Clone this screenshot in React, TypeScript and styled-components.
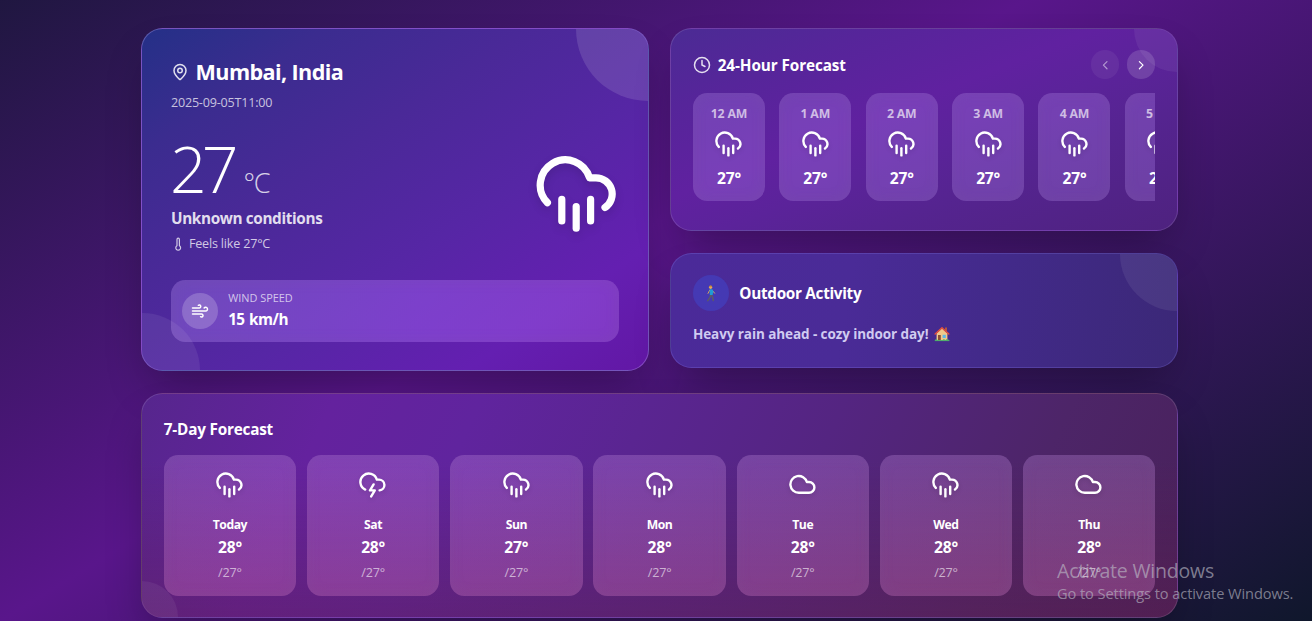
import React from "react";
import styled, { createGlobalStyle, css } from "styled-components";
import {
  ChevronLeft,
  ChevronRight,
  Clock,
  Cloud,
  CloudLightning,
  CloudRain,
  MapPin,
  Thermometer,
  Wind,
} from "lucide-react";

const GlobalStyle = createGlobalStyle`
  *, *::before, *::after { box-sizing: border-box; }
  html, body { margin: 0; padding: 0; height: 100%; overflow: hidden; }
  body {
    font-family: "Open Sans", "Noto Sans", sans-serif;
    color: #fff;
    background: #0f172b;
  }
`;

const Page = styled.div`
  position: relative;
  height: 621px;
  overflow: hidden;
  padding: 28px 0 0 141.15px;
  background: linear-gradient(to bottom right, #0f172b, #59168b 50%, #0f172b) 0 -179px / 1320px 800px no-repeat;
`;

const Dashboard = styled.main`
  width: 1036.8px;
  display: flex;
  flex-direction: column;
  gap: 22px;
`;

const TopRow = styled.div`
  display: grid;
  grid-template-columns: 1fr 1fr;
  gap: 21.6px;
  align-items: start;
`;

const SideColumn = styled.div`
  display: flex;
  flex-direction: column;
  gap: 22.2px;
  min-width: 0;
`;

const Card = styled.section`
  position: relative;
  overflow: hidden;
  border-radius: 21.6px;
  border: 1px solid rgba(255, 255, 255, 0.13);
  padding: 21.6px;
  box-shadow: 0 22px 45px -11px rgba(0, 0, 0, 0.32);
`;

const CurrentCard = styled(Card)`
  height: 343.2px;
  padding: 28.8px;
  border-color: rgba(200, 180, 255, 0.32);
  background: linear-gradient(to bottom right, #243087 0%, #3b2c8f 18%, #4a2998 38%, #5626a5 60%, #641fb1 82%, #6217a5 100%);
`;

const HourlyCard = styled(Card)`
  height: 202.8px;
  background: linear-gradient(to bottom right, #4b2b94 0%, #56259a 20%, #6021a0 42%, #5b239a 55%, #552490 70%, #4e227f 100%);
`;

const ActivityCard = styled(Card)`
  height: 114.8px;
  border-color: rgba(150, 140, 255, 0.22);
  background: linear-gradient(100deg, #4b2a99 0%, #4a2b97 35%, #422a89 65%, #3b2877 100%);
`;

const WeeklyCard = styled(Card)`
  height: 224.4px;
  background:
    linear-gradient(to bottom, rgba(96, 24, 60, 0) 30%, rgba(96, 28, 70, 0.38) 100%),
    linear-gradient(115deg, #56268d 0%, #64229e 17%, #60249e 30%, #5a2591 45%, #542581 62%, #4d2568 82%, #48215a 100%);
`;

const Bubble = styled.span<{ $r: number; $corner: "top" | "bottom"; $alpha: number }>`
  position: absolute;
  width: ${(p) => p.$r * 2}px;
  height: ${(p) => p.$r * 2}px;
  border-radius: 50%;
  background: rgba(255, 255, 255, ${(p) => p.$alpha});
  ${(p) =>
    p.$corner === "top"
      ? css`top: -${p.$r}px; right: -${p.$r}px;`
      : css`bottom: -${p.$r}px; left: -${p.$r}px;`}
`;

const Place = styled.h1`
  margin: 0;
  display: flex;
  align-items: center;
  gap: 6.6px;
  font-size: 21.6px;
  line-height: 28.8px;
  font-weight: 700;
  letter-spacing: -0.6px;
  svg { opacity: 0.85; }
`;

const Stamp = styled.div`
  margin-top: 7.2px;
  font-size: 12.6px;
  line-height: 18px;
  letter-spacing: -0.22px;
  color: rgba(255, 255, 255, 0.72);
`;

const CurrentRow = styled.div`
  display: flex;
  justify-content: space-between;
  align-items: center;
  margin-top: 20.8px;
  > svg {
    margin: -1.6px -0.8px 0 0;
    filter: drop-shadow(0 4px 4px rgba(0, 0, 0, 0.12));
  }
`;

const Degrees = styled.div`
  display: flex;
  align-items: baseline;
  gap: 9.8px;
  height: 64.8px;
  margin-left: -1px;
  line-height: 70.2px;
  font-size: 64.4px;
  font-weight: 300;
  letter-spacing: -4.9px;
`;

const Unit = styled.span`
  font-size: 27px;
  letter-spacing: -1.2px;
  color: rgba(255, 255, 255, 0.8);
`;

const Condition = styled.div`
  margin-top: 8.4px;
  font-size: 15.3px;
  line-height: 25.2px;
  font-weight: 700;
  letter-spacing: -0.36px;
  color: rgba(255, 255, 255, 0.86);
`;

const FeelsLike = styled.div`
  display: flex;
  align-items: center;
  gap: 3.6px;
  margin-top: 4px;
  font-size: 12.6px;
  line-height: 18px;
  letter-spacing: -0.2px;
  color: rgba(255, 255, 255, 0.75);
`;

const glass = css`
  border-radius: 14.4px;
  background: rgba(195, 150, 255, 0.26);
  box-shadow: inset 0 0 14px rgba(120, 90, 150, 0.2);
`;

const WindPanel = styled.div`
  ${glass}
  display: flex;
  align-items: center;
  gap: 10.4px;
  margin-top: 27.4px;
  padding: 10.8px;
  background: linear-gradient(to right, rgba(165, 125, 240, 0.38), rgba(160, 95, 240, 0.48) 55%, rgba(160, 90, 225, 0.48));
`;

const Disc = styled.span<{ $fill: string }>`
  display: flex;
  align-items: center;
  justify-content: center;
  flex: none;
  width: 36px;
  height: 36px;
  border-radius: 50%;
  background: ${(p) => p.$fill};
`;

const WindLabel = styled.div`
  font-size: 10.9px;
  line-height: 14.4px;
  color: rgba(255, 255, 255, 0.7);
`;

const WindValue = styled.div`
  padding-top: 2px;
  font-size: 15.3px;
  line-height: 23.2px;
  font-weight: 700;
  letter-spacing: -0.5px;
  word-spacing: 1px;
`;

const CardHead = styled.header`
  display: flex;
  align-items: center;
  justify-content: space-between;
  height: 28.8px;
`;

const Title = styled.h2<{ $track?: number }>`
  margin: 0;
  padding-top: 1.6px;
  font-size: 15.3px;
  line-height: 23.6px;
  font-weight: 700;
  letter-spacing: ${(p) => p.$track ?? -0.3}px;
`;

const WeekTitle = styled(Title)`
  padding-top: 2.6px;
  line-height: 22.6px;
`;

const IconTitle = styled.div`
  display: flex;
  align-items: center;
  gap: 6.8px;
  > svg { opacity: 0.85; }
`;

const Pager = styled.div`
  display: flex;
  gap: 7.2px;
`;

const PagerButton = styled.button<{ $off?: boolean }>`
  display: flex;
  align-items: center;
  justify-content: center;
  width: 28.8px;
  height: 28.8px;
  margin-top: -0.6px;
  padding: 0;
  border: 0;
  border-radius: 50%;
  color: rgba(255, 255, 255, ${(p) => (p.$off ? 0.5 : 1)});
  background: rgba(255, 255, 255, ${(p) => (p.$off ? 0.06 : 0.14)});
`;

const HourStrip = styled.div`
  display: flex;
  gap: 14.4px;
  margin-top: 13.8px;
  overflow: hidden;
`;

const WeatherTile = styled.div`
  ${glass}
  display: flex;
  flex-direction: column;
  align-items: center;
  svg { filter: drop-shadow(0 2px 2px rgba(0, 0, 0, 0.12)); }
`;

const HourTile = styled(WeatherTile)`
  flex: 0 0 72px;
  height: 108px;
  padding-top: 12px;
  svg { margin: 5.4px 0 8.8px -0.3px; }
`;

const HourLabel = styled.div`
  font-size: 12.3px;
  line-height: 18px;
  font-weight: 700;
  letter-spacing: -0.2px;
  color: rgba(255, 255, 255, 0.66);
`;

const Temp = styled.div`
  font-size: 15.6px;
  line-height: 25.2px;
  font-weight: 700;
  letter-spacing: -0.2px;
`;

const ActivityHead = styled.header`
  display: flex;
  align-items: center;
  gap: 10.4px;
  height: 36px;
  margin-top: -0.4px;
`;

const Advice = styled.p`
  display: flex;
  align-items: center;
  gap: 5.6px;
  margin: 12.4px 0 0;
  font-size: 13.5px;
  line-height: 21.6px;
  font-weight: 700;
  letter-spacing: -0.08px;
  color: rgba(228, 226, 255, 0.88);
`;

const WeekGrid = styled.div`
  display: grid;
  grid-template-columns: repeat(7, 1fr);
  gap: 10.8px;
  margin-top: 14.4px;
`;

const DayTile = styled(WeatherTile)`
  height: 140.8px;
  padding-top: 14.4px;
  background: linear-gradient(to bottom, rgba(215, 155, 245, 0.26), rgba(230, 125, 205, 0.3));
  svg { margin-left: -0.6px; }
`;

const DayName = styled.div`
  margin-top: 17.6px;
  font-size: 12.2px;
  line-height: 18px;
  font-weight: 700;
  letter-spacing: -0.45px;
`;

const DayHigh = styled(Temp)`
  margin-top: 1px;
`;

const DayLow = styled.div`
  margin-top: 3.6px;
  font-size: 12.6px;
  line-height: 18px;
  letter-spacing: -0.2px;
  color: rgba(255, 255, 255, 0.6);
`;

const Activation = styled.aside`
  position: absolute;
  left: 1057px;
  top: 558px;
  color: rgba(190, 190, 200, 0.62);
  white-space: nowrap;
`;

const ActivationTitle = styled.div`
  font-size: 19.5px;
  line-height: 26px;
  letter-spacing: -0.18px;
`;

const ActivationText = styled.div`
  font-size: 14.6px;
  line-height: 18.4px;
  letter-spacing: -0.08px;
`;

const WalkerIcon = () => (
  <svg width="12" height="17" viewBox="0 0 12 17" fill="none">
    <path d="M5.8 9.4 5 12.4 2.8 15.6M6.4 9.6l1.3 2.6.5 3.4" stroke="#5d5a66" strokeWidth="1.5" strokeLinecap="round" />
    <path d="M4.8 5 3 8.4M7.4 5.4l2.2 2.8" stroke="#d9a05f" strokeWidth="1" strokeLinecap="round" />
    <path d="M4.6 4.2h2.8l1 2.4-.8 3.4H4.8z" fill="#1f9bd6" />
    <circle cx="5.6" cy="2.3" r="1.6" fill="#e3a55f" />
    <path d="M4 1.8C4.4.2 6.8.2 7.3 1.8z" fill="#c98b2e" />
  </svg>
);

const HouseIcon = () => (
  <svg width="16" height="16" viewBox="0 0 16 16" fill="none">
    <path d="M2.6 7.4 8 2.6l5.4 4.8v7H2.6z" fill="#f1c88a" />
    <path d="M11 1.6h2v4l-2-1.8z" fill="#b5543c" />
    <path d="M1.2 8 8 1.8 14.8 8" stroke="#e5503d" strokeWidth="1.5" strokeLinecap="round" strokeLinejoin="round" />
    <rect x="4" y="9" width="2.8" height="5.4" fill="#8a4f35" />
    <rect x="8.6" y="8.8" width="3.2" height="3.2" fill="#5db9ea" />
    <path d="M.8 14.6c.6-1.8 2.4-1.8 3 0zM8.4 14.6c.6-1.8 2.2-1.8 3 0 .4-1.8 3-1.8 3.8 0z" fill="#4fb36a" />
    <path d="M.8 14.6h14.6" stroke="#4fb36a" strokeWidth="1" />
  </svg>
);

const hours = ["12 AM", "1 AM", "2 AM", "3 AM", "4 AM", "5 AM"];

const days = [
  { name: "Today", Icon: CloudRain, high: 28 },
  { name: "Sat", Icon: CloudLightning, high: 28 },
  { name: "Sun", Icon: CloudRain, high: 27 },
  { name: "Mon", Icon: CloudRain, high: 28 },
  { name: "Tue", Icon: Cloud, high: 28 },
  { name: "Wed", Icon: CloudRain, high: 28 },
  { name: "Thu", Icon: Cloud, high: 28 },
];

export default function App() {
  return (
    <>
      <GlobalStyle />
      <Page>
        <Dashboard>
          <TopRow>
            <CurrentCard>
              <Bubble $r={72} $corner="top" $alpha={0.12} />
              <Place>
                <MapPin size={18} />
                Mumbai, India
              </Place>
              <Stamp>2025-09-05T11:00</Stamp>
              <CurrentRow>
                <div>
                  <Degrees>
                    27<Unit>°C</Unit>
                  </Degrees>
                  <Condition>Unknown conditions</Condition>
                  <FeelsLike>
                    <Thermometer size={14.4} />
                    Feels like 27°C
                  </FeelsLike>
                </div>
                <CloudRain size={86.4} />
              </CurrentRow>
              <WindPanel>
                <Disc $fill="rgba(255, 255, 255, 0.2)">
                  <Wind size={18} />
                </Disc>
                <div>
                  <WindLabel>WIND SPEED</WindLabel>
                  <WindValue>15 km/h</WindValue>
                </div>
              </WindPanel>
              <Bubble $r={57.6} $corner="bottom" $alpha={0.07} />
            </CurrentCard>
            <SideColumn>
              <HourlyCard>
                <Bubble $r={43.2} $corner="top" $alpha={0.06} />
                <CardHead>
                  <IconTitle>
                    <Clock size={18} />
                    <Title $track={-0.1}>24-Hour Forecast</Title>
                  </IconTitle>
                  <Pager>
                    <PagerButton $off aria-label="Previous hours">
                      <ChevronLeft size={14.4} />
                    </PagerButton>
                    <PagerButton aria-label="Next hours">
                      <ChevronRight size={14.4} />
                    </PagerButton>
                  </Pager>
                </CardHead>
                <HourStrip>
                  {hours.map((hour) => (
                    <HourTile key={hour}>
                      <HourLabel>{hour}</HourLabel>
                      <CloudRain size={28.8} />
                      <Temp>27°</Temp>
                    </HourTile>
                  ))}
                </HourStrip>
              </HourlyCard>
              <ActivityCard>
                <Bubble $r={57} $corner="top" $alpha={0.07} />
                <ActivityHead>
                  <Disc $fill="rgba(60, 80, 220, 0.4)">
                    <WalkerIcon />
                  </Disc>
                  <Title>Outdoor Activity</Title>
                </ActivityHead>
                <Advice>
                  Heavy rain ahead - cozy indoor day!
                  <HouseIcon />
                </Advice>
              </ActivityCard>
            </SideColumn>
          </TopRow>
          <WeeklyCard>
            <Bubble $r={36} $corner="bottom" $alpha={0.06} />
            <WeekTitle $track={-0.2}>7-Day Forecast</WeekTitle>
            <WeekGrid>
              {days.map(({ name, Icon, high }) => (
                <DayTile key={name}>
                  <Icon size={28.8} />
                  <DayName>{name}</DayName>
                  <DayHigh>{high}°</DayHigh>
                  <DayLow>/27°</DayLow>
                </DayTile>
              ))}
            </WeekGrid>
          </WeeklyCard>
        </Dashboard>
        <Activation>
          <ActivationTitle>Activate Windows</ActivationTitle>
          <ActivationText>Go to Settings to activate Windows.</ActivationText>
        </Activation>
      </Page>
    </>
  );
}
